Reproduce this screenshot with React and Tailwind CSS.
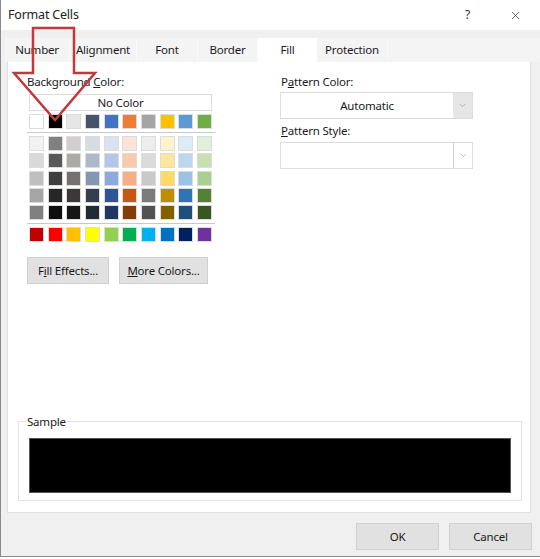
import { X, ChevronDown } from "lucide-react";

const themeRow = ["#ffffff", "#000000", "#e7e6e6", "#44546a", "#4472c4", "#ed7d31", "#a5a5a5", "#ffc000", "#5b9bd5", "#70ad47"];

// each column is one theme colour, light to dark
const tintColumns = [
  ["#f2f2f2", "#d9d9d9", "#bfbfbf", "#a6a6a6", "#808080"],
  ["#808080", "#595959", "#404040", "#262626", "#0d0d0d"],
  ["#d0cece", "#aeaaaa", "#757171", "#3a3838", "#161616"],
  ["#d6dce4", "#acb9ca", "#8497b0", "#333f4f", "#222b35"],
  ["#d9e1f2", "#b4c6e7", "#8ea9db", "#305496", "#203764"],
  ["#fce4d6", "#f8cbad", "#f4b084", "#c65911", "#833c0c"],
  ["#ededed", "#dbdbdb", "#c9c9c9", "#7b7b7b", "#525252"],
  ["#fff2cc", "#ffe699", "#ffd966", "#bf8f00", "#806000"],
  ["#ddebf7", "#bdd7ee", "#9bc2e6", "#2f75b5", "#1f4e78"],
  ["#e2efda", "#c6e0b4", "#a9d08e", "#548235", "#375623"],
];

const standardRow = ["#c00000", "#ff0000", "#ffc000", "#ffff00", "#92d050", "#00b050", "#00b0f0", "#0070c0", "#002060", "#7030a0"];

const tabs = [
  { label: "Number", w: "w-[65px]" },
  { label: "Alignment", w: "w-[67px]" },
  { label: "Font", w: "w-[61px]" },
  { label: "Border", w: "w-[60px]" },
  { label: "Fill", w: "w-[59px]", active: true },
  { label: "Protection", w: "w-[71px]" },
];

function SwatchRow({ colors }) {
  return (
    <div className="flex w-[183px] justify-between">
      {colors.map((c, i) => (
        <div key={i} className="h-[15px] w-[15px] border border-[#dcdcdc]" style={{ backgroundColor: c }} />
      ))}
    </div>
  );
}

function Dropdown({ value, flat }) {
  return (
    <div className="flex h-[27px] w-[193px] border border-[#dcdcdc] bg-white">
      <div className="flex flex-1 items-center justify-center text-[#1a1a1a]">{value}</div>
      <div className={`flex w-[19px] items-center justify-center ${flat ? "bg-[#e6e6e6]" : "border-l border-[#cfcfcf] bg-white"}`}>
        <ChevronDown size={9} strokeWidth={1.5} className="text-[#8a8a8a]" />
      </div>
    </div>
  );
}

function Button({ children, className = "" }) {
  return (
    <div className={`flex h-[27px] items-center justify-center border border-[#d0d0d0] bg-[#e1e1e1] text-[#1a1a1a] ${className}`}>
      {children}
    </div>
  );
}

export default function App() {
  return (
    <div className="relative h-[559px] w-[540px] overflow-hidden bg-white font-['Noto_Sans',sans-serif] text-[11.5px] leading-[14px] tracking-[-0.2px] text-[#1a1a1a]">
      <div className="flex h-[557px] flex-col border-b border-l border-[#8a8a8a] bg-[#f0f0f0]">
        {/* title bar */}
        <div className="flex h-[30px] shrink-0 items-center bg-white pl-[7px]">
          <span className="text-[12.5px] text-[#222]">Format Cells</span>
          <span className="ml-auto mr-[39px] text-[12px] text-[#333]">?</span>
          <X size={13} strokeWidth={1.3} className="mr-[18px] text-[#333]" />
        </div>

        {/* tab strip */}
        <div className="ml-[4px] mt-[8px] flex h-[24px] shrink-0 bg-[#f4f4f4]">
          {tabs.map((t) => (
            <div
              key={t.label}
              className={`flex items-center justify-center ${t.w} ${t.active ? "bg-white" : "border-r border-[#fafafa]"}`}
            >
              {t.label}
            </div>
          ))}
        </div>

        {/* page */}
        <div className="ml-[6px] flex h-[451px] w-[524px] shrink-0 flex-col border border-t-0 border-[#e0e0e0] bg-white">
          <div className="flex pt-[13px]">
            <div className="ml-[19px] flex w-[190px] flex-col">
              <div>
                Background <span className="underline">C</span>olor:
              </div>
              <div className="ml-[2px] mt-[5px] flex h-[17px] w-[183px] items-center justify-center border border-[#dcdcdc]">
                No Color
              </div>
              <div className="ml-[2px] mt-[3px]">
                <SwatchRow colors={themeRow} />
              </div>
              <div className="my-[3px] h-px w-[188px] bg-[#c8c8c8]" />
              <div className="ml-[2px] flex flex-col gap-[2.3px]">
                {[0, 1, 2, 3, 4].map((r) => (
                  <SwatchRow key={r} colors={tintColumns.map((col) => col[r])} />
                ))}
              </div>
              <div className="my-[3px] h-px w-[188px] bg-[#c8c8c8]" />
              <div className="ml-[2px]">
                <SwatchRow colors={standardRow} />
              </div>
              <div className="mt-[15px] flex gap-[10px]">
                <Button className="w-[82px]">
                  <span>
                    F<span className="underline">i</span>ll Effects...
                  </span>
                </Button>
                <Button className="w-[89px]">
                  <span>
                    <span className="underline">M</span>ore Colors...
                  </span>
                </Button>
              </div>
            </div>

            <div className="ml-[63px] flex w-[193px] flex-col">
              <div className="ml-[1px]">
                P<span className="underline">a</span>ttern Color:
              </div>
              <div className="mt-[3px]">
                <Dropdown value="Automatic" flat />
              </div>
              <div className="ml-[1px] mt-[5px]">
                <span className="underline">P</span>attern Style:
              </div>
              <div className="mt-[4px]">
                <Dropdown value="" />
              </div>
            </div>
          </div>

          <div className="flex-1" />

          {/* sample group */}
          <div className="relative mb-[11px] ml-[10px] h-[80px] w-[504px] border border-[#e3e3e3] px-[10px] pb-[7px] pt-[16px]">
            <span className="absolute left-[7px] top-[-7px] bg-white px-[1px]">Sample</span>
            <div className="h-[55px] w-full border border-[#555] bg-black" />
          </div>
        </div>

        {/* footer buttons */}
        <div className="ml-[355px] mt-[10px] flex gap-[10px]">
          <Button className="h-[26px] w-[83px] border-[#0078d7]">OK</Button>
          <Button className="h-[26px] w-[83px] border-[#cfcfcf]">Cancel</Button>
        </div>
      </div>

      {/* red annotation arrow pointing at the black swatch */}
      <svg className="pointer-events-none absolute left-0 top-0" width="120" height="130" viewBox="0 0 120 130">
        <polygon
          points="33,28 74,28 74,73 95,73 55,120 14,73 33,73"
          fill="none"
          stroke="#c0393b"
          strokeWidth="2.5"
          strokeLinejoin="miter"
        />
      </svg>
    </div>
  );
}
